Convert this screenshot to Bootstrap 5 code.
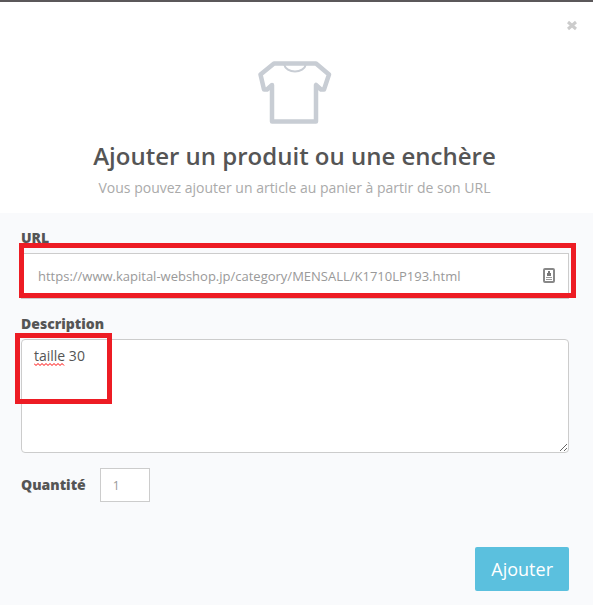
<!DOCTYPE html>
<html lang="fr">
<head>
<meta charset="utf-8">
<meta name="viewport" content="width=device-width, initial-scale=1">
<title>Ajouter un produit ou une enchère</title>
<link href="https://cdn.jsdelivr.net/npm/bootstrap@5.3.0/dist/css/bootstrap.min.css" rel="stylesheet">
<style>
body { font-family: "Open Sans", sans-serif; font-size: 14px; line-height: 20px; color: #555; background: #f9fafc; }
.dialog-panel { border-top: 2px solid #5b585a; }
.dialog-head { padding: 59px 24px 15px 20px; background: #fff; }
.dialog-head h1 { font-size: 24px; line-height: 32px; font-weight: 600; color: #555; margin: 15px 0 6px; }
.dialog-head p { line-height: 20px; color: #aaa; }
.close-btn { top: 15px; right: 14px; width: 14px; height: 16px; line-height: 0; }
.dialog-form { padding: 15px 24px 14px 21px; }
.field-label { font-weight: 800; line-height: 20px; color: #555; }
.stacked-label { margin-bottom: 5px; }
.field-box { margin-bottom: 15px; }
.dialog-form .form-control { font-family: inherit; border-color: #ccc; color: #555; background: #fff; }
.dialog-form .url-input { height: 46px; padding: 6px 40px 6px 16px; font-size: 13px; color: #999; border-radius: 0; }
.dialog-form .desc-input { height: 114px; padding: 6px 12px; font-size: 14px; line-height: 20px; border-radius: 4px; }
.dialog-form .qty-input { width: 50px; height: 34px; padding: 6px 12px; font-size: 12px; color: #999; border-radius: 0; }
.qty-label { margin-right: 14px; }
.autofill-icon { right: 14px; top: 15px; }
.spelling { left: 13px; top: 24px; }
.highlight { border: 5px solid #ed1c24; pointer-events: none; z-index: 2; }
.highlight-url { inset: -10px -7px 1px -2px; }
.highlight-desc { left: -6px; top: -6px; width: 97px; height: 71px; }
.dialog-form .submit-btn { background: #5bc0de; color: #fff; font-size: 18px; line-height: 24px; padding: 10px 16px; border: 0; border-radius: 2px; }
.submit-row { margin-top: 45px; }
</style>
<script src="https://cdn.jsdelivr.net/npm/bootstrap@5.3.0/dist/js/bootstrap.bundle.min.js"></script>
</head>
<body>
<main class="dialog-panel position-relative">
  <button type="button" class="close-btn position-absolute btn p-0 border-0" aria-label="Fermer">
    <svg width="14" height="16" viewBox="0 0 14 16"><path d="M3 5l8 7M11 5l-8 7" stroke="#ccc" stroke-width="3" fill="none"/></svg>
  </button>
  <header class="dialog-head text-center">
    <svg class="d-block mx-auto" width="74" height="64" viewBox="0 0 74 64" fill="none" stroke="#c8cdd4" stroke-linejoin="round" aria-hidden="true">
      <path d="M16 2.500H58L71 13.500L66 28.500H63L58 24V60.500H14V24L9 28.500H6L2.500 13.500Z" stroke-width="4.500"/>
      <path d="M26 3C28 13 46 13 48 3" stroke-width="2"/>
    </svg>
    <h1>Ajouter un produit ou une enchère</h1>
    <p class="mb-0">Vous pouvez ajouter un article au panier à partir de son URL</p>
  </header>
  <form class="dialog-form">
    <label class="field-label stacked-label d-block" for="url">URL</label>
    <div class="field-box position-relative">
      <input class="form-control url-input" type="url" id="url" value="https://www.kapital-webshop.jp/category/MENSALL/K1710LP193.html">
      <svg class="autofill-icon position-absolute" width="12" height="16" viewBox="0 0 12 16" aria-hidden="true">
        <rect x="1" y="1" width="10" height="13" rx="1" fill="#fff" stroke="#888" stroke-width="2"/>
        <path d="M5 3h2v2h1v3H4V5h1z" fill="#777"/><path d="M3 9h6v1H3zM3 11h6v1H3z" fill="#999"/>
      </svg>
      <div class="highlight highlight-url position-absolute"></div>
    </div>
    <label class="field-label stacked-label d-block" for="description">Description</label>
    <div class="field-box position-relative">
      <textarea class="form-control desc-input" id="description" spellcheck="false">taille 30</textarea>
      <svg class="spelling position-absolute" width="31" height="3" viewBox="0 0 31 3" aria-hidden="true"><path d="M0 .5l2 2 2-2 2 2 2-2 2 2 2-2 2 2 2-2 2 2 2-2 2 2 2-2 2 2 2-2 2 2" fill="none" stroke="#f00"/></svg>
      <div class="highlight highlight-desc position-absolute"></div>
    </div>
    <div class="d-flex align-items-center">
      <label class="field-label qty-label" for="quantity">Quantité</label>
      <input class="form-control qty-input" type="text" inputmode="numeric" id="quantity" value="1">
    </div>
    <div class="submit-row d-flex justify-content-end">
      <button type="submit" class="btn submit-btn">Ajouter</button>
    </div>
  </form>
</main>
</body>
</html>
